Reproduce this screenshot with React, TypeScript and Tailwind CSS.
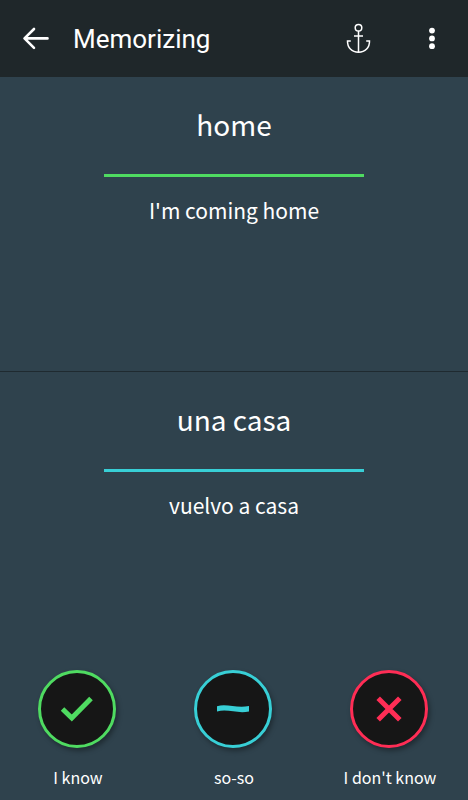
import type { ReactNode } from "react";

type CardProps = { word: string; example: string; lineClass: string };

function WordCard({ word, example, lineClass }: CardProps) {
  return (
    <section className="flex flex-col items-stretch pt-[29px] text-center">
      <h2 className="text-[28px] leading-9">{word}</h2>
      <div className={`mx-26 mt-8 h-[3px] ${lineClass}`} />
      <p className="mt-[19px] text-[21px] leading-7">{example}</p>
    </section>
  );
}

type AnswerProps = { label: string; colorClass: string; children: ReactNode };

function AnswerButton({ label, colorClass, children }: AnswerProps) {
  return (
    <button type="button" className="flex flex-1 flex-col items-center gap-[15px] whitespace-nowrap">
      <span
        className={`mr-[3px] flex size-[78px] items-center justify-center rounded-full border-[3px] bg-[#161616] shadow-[2px_3px_5px_rgba(0,0,0,0.35)] ${colorClass}`}
      >
        {children}
      </span>
      <span className="text-base leading-7">{label}</span>
    </button>
  );
}

export default function App() {
  return (
    <div className="flex min-h-screen flex-col bg-[#2f424d] font-['Noto_Sans_CJK_SC','Noto_Sans',sans-serif] text-white">
      <header className="flex h-[77px] items-center bg-[#1f272a] pr-[29px] pl-[22px]">
        <button type="button" aria-label="Back">
          <svg width="28" height="24" viewBox="0 0 28 24" fill="none" stroke="currentColor" strokeWidth="2.6" strokeLinecap="round" strokeLinejoin="round">
            <path d="M12 2 2.5 11.4 12 20.8M3 11.4H25.5" />
          </svg>
        </button>
        <h1 className="ml-[23px] flex-1 font-[Roboto,sans-serif] text-[26px] leading-8">Memorizing</h1>
        <button type="button" aria-label="Anchor">
          <svg width="26" height="32" viewBox="0 0 26 32" fill="none" stroke="currentColor" strokeWidth="1.5">
            <circle cx="13.5" cy="4.8" r="3.3" />
            <path d="M13.5 8V29M9 13H18M5.8 18H2.5C2.3 24.5 6.7 29.2 13.5 29.2S24.7 24.5 24.5 18H21.2" />
          </svg>
        </button>
        <button type="button" aria-label="More options" className="ml-[54px]">
          <svg width="14" height="24" viewBox="0 0 14 24" fill="currentColor">
            <circle cx="7" cy="3.6" r="2.9" />
            <circle cx="7" cy="11.4" r="2.9" />
            <circle cx="7" cy="19.2" r="2.9" />
          </svg>
        </button>
      </header>

      <main className="grid flex-1 grid-rows-[294fr_298fr]">
        <WordCard word="home" example="I'm coming home" lineClass="bg-[#4fdb61]" />
        <div className="border-t border-[#1f2a30]">
          <WordCard word="una casa" example="vuelvo a casa" lineClass="bg-[#38cfd6]" />
        </div>
      </main>

      <footer className="flex pb-[9px]">
        <AnswerButton label="I know" colorClass="border-[#4fdb61] text-[#4fdb61]">
          <svg width="34" height="28" viewBox="0 0 34 28" fill="none" stroke="currentColor" strokeWidth="5">
            <path d="M2.5 14 11.8 23 31 3.5" />
          </svg>
        </AnswerButton>
        <AnswerButton label="so-so" colorClass="border-[#38cfd6] text-[#38cfd6]">
          <svg width="32" height="10" viewBox="0 0 32 10" fill="currentColor">
            <path d="M0 2.2C10-.5 20 4.5 32 2V7.5C20 10 11 4.5 0 7.5Z" />
          </svg>
        </AnswerButton>
        <AnswerButton label="I don't know" colorClass="border-[#ff2d55] text-[#ff2d55]">
          <svg width="26" height="26" viewBox="0 0 26 26" fill="none" stroke="currentColor" strokeWidth="5">
            <path d="M2.2 2.2 23.8 23.8M23.8 2.2 2.2 23.8" />
          </svg>
        </AnswerButton>
      </footer>
    </div>
  );
}
